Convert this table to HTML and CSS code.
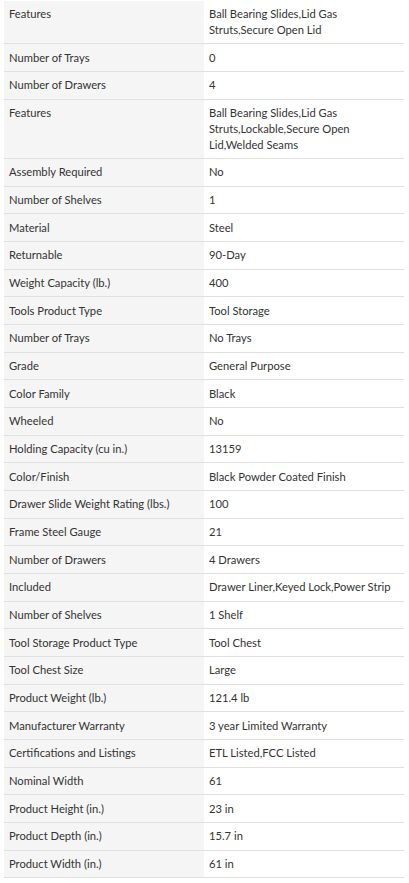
FILE: index.html
```html
<!DOCTYPE html>
<html>
<head>
<meta charset="utf-8">
<link rel="stylesheet" href="styles.css">
</head>
<body>
<table class="specs">
<colgroup><col class="col-label"><col class="col-value"></colgroup>
<tbody>
<tr><th>Features</th><td>Ball Bearing Slides,Lid Gas Struts,Secure Open Lid</td></tr>
<tr><th>Number of Trays</th><td>0</td></tr>
<tr><th>Number of Drawers</th><td>4</td></tr>
<tr><th>Features</th><td>Ball Bearing Slides,Lid Gas Struts,Lockable,Secure Open Lid,Welded Seams</td></tr>
<tr><th>Assembly Required</th><td>No</td></tr>
<tr><th>Number of Shelves</th><td>1</td></tr>
<tr><th>Material</th><td>Steel</td></tr>
<tr><th>Returnable</th><td>90-Day</td></tr>
<tr><th>Weight Capacity (lb.)</th><td>400</td></tr>
<tr><th>Tools Product Type</th><td>Tool Storage</td></tr>
<tr><th>Number of Trays</th><td>No Trays</td></tr>
<tr><th>Grade</th><td>General Purpose</td></tr>
<tr><th>Color Family</th><td>Black</td></tr>
<tr><th>Wheeled</th><td>No</td></tr>
<tr><th>Holding Capacity (cu in.)</th><td>13159</td></tr>
<tr><th>Color/Finish</th><td>Black Powder Coated Finish</td></tr>
<tr><th>Drawer Slide Weight Rating (lbs.)</th><td>100</td></tr>
<tr><th>Frame Steel Gauge</th><td>21</td></tr>
<tr><th>Number of Drawers</th><td>4 Drawers</td></tr>
<tr><th>Included</th><td>Drawer Liner,Keyed Lock,Power Strip</td></tr>
<tr><th>Number of Shelves</th><td>1 Shelf</td></tr>
<tr><th>Tool Storage Product Type</th><td>Tool Chest</td></tr>
<tr><th>Tool Chest Size</th><td>Large</td></tr>
<tr><th>Product Weight (lb.)</th><td>121.4 lb</td></tr>
<tr><th>Manufacturer Warranty</th><td>3 year Limited Warranty</td></tr>
<tr><th>Certifications and Listings</th><td>ETL Listed,FCC Listed</td></tr>
<tr><th>Nominal Width</th><td>61</td></tr>
<tr><th>Product Height (in.)</th><td>23 in</td></tr>
<tr><th>Product Depth (in.)</th><td>15.7 in</td></tr>
<tr><th>Product Width (in.)</th><td>61 in</td></tr>
</tbody>
</table>
</body>
</html>
```
FILE: styles.css
```css
html, body {
  margin: 0;
  padding: 0;
  background: #ffffff;
}
body {
  padding: 0.8px 5px 0 4px;
  font-family: Lato, "Open Sans", sans-serif;
  font-size: 11.2px;
  color: #333333;
}
.specs {
  width: 400px;
  border-collapse: collapse;
  table-layout: fixed;
}
.col-label,
.col-value {
  width: 200px;
}
.specs th,
.specs td {
  box-sizing: border-box;
  text-align: left;
  vertical-align: top;
  font-weight: normal;
  line-height: 15.8px;
  padding: 5.45px 12px 5.45px 5px;
  border-bottom: 1px solid #e0e0e0;
}
.specs th {
  background: #f5f5f5;
}
.specs td {
  background: #ffffff;
}
```
